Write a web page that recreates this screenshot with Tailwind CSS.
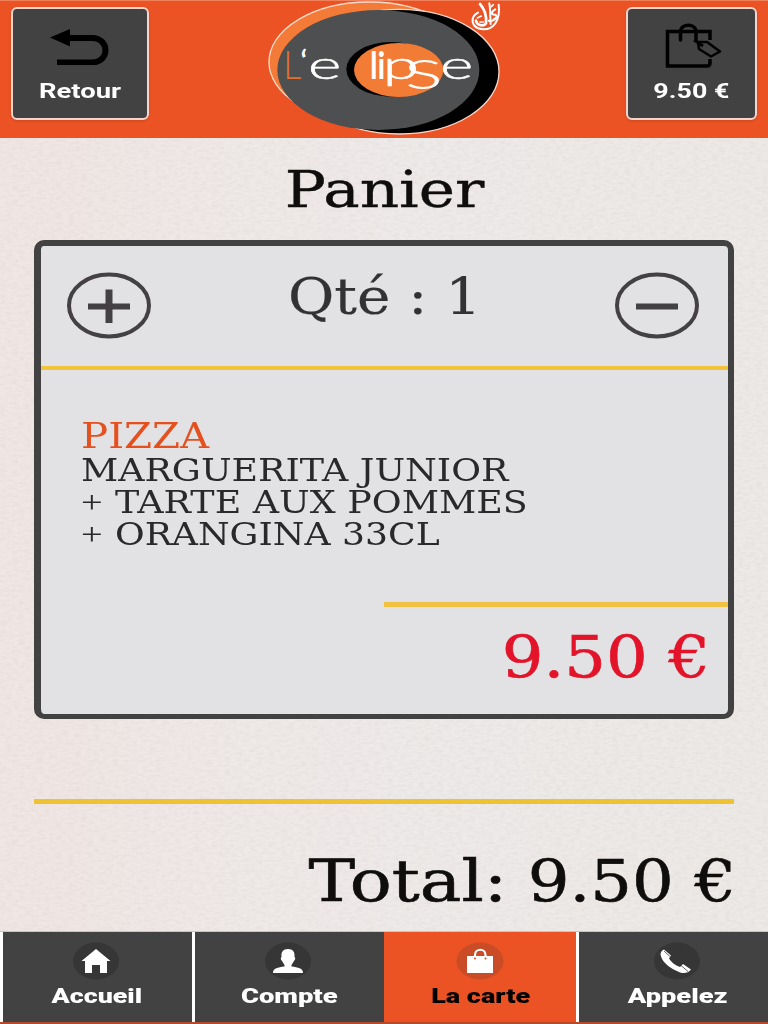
<!DOCTYPE html>
<html lang="fr">
<head>
  <meta charset="UTF-8" />
  <title>Panier</title>
  <script src="https://cdn.jsdelivr.net/npm/@tailwindcss/browser@4"></script>
</head>
<body class="w-[768px] h-[1024px] overflow-hidden">
  <div class="relative isolate w-[768px] h-[1024px] flex flex-col bg-[#ebe6e4] font-['DejaVu_Serif',serif]">

    <!-- Linen background -->
    <svg class="absolute inset-0 -z-10" width="768" height="1024">
      <defs>
        <filter id="linen" x="0" y="0" width="100%" height="100%">
          <feTurbulence type="fractalNoise" baseFrequency="0.16 0.4" numOctaves="3" seed="4" />
          <feColorMatrix values="0 0 0 0 0.5  0 0 0 0 0.45  0 0 0 0 0.42  0.3 0 0 0 -0.11" />
        </filter>
        <linearGradient id="tint">
          <stop offset="0" stop-color="#f0e6e3" />
          <stop offset="0.5" stop-color="#eeeae9" />
          <stop offset="1" stop-color="#ede9e6" />
        </linearGradient>
      </defs>
      <rect width="768" height="1024" fill="url(#tint)" />
      <rect width="768" height="1024" filter="url(#linen)" />
    </svg>

    <!-- Header -->
    <header class="h-[138px] shrink-0 flex justify-between items-start bg-[#eb5224] border-t border-[#f08059] px-[11px] font-[Roboto,sans-serif]">
      <button class="mt-[6px] w-[138px] h-[113px] rounded-md border-2 border-[#f3d5cb] bg-[#424243] shadow flex flex-col items-center">
        <svg class="mt-[18px] block" width="60" height="38" viewBox="0 0 60 38">
          <path d="M19 11H42C60 11 60 35.500 42 35.500H7" fill="none" stroke="#000" stroke-width="6" />
          <path d="M0 10.500L20 2V19.500Z" fill="#000" />
        </svg>
        <span class="mt-[14px] text-[20px] leading-[24px] font-bold text-white scale-x-[1.37]">Retour</span>
      </button>

      <svg class="-mt-px -ml-[7px] block" width="256" height="138" viewBox="0 0 768 414">
        <ellipse cx="340" cy="186" rx="301" ry="180" fill="#f47b37" stroke="#fbd9c8" stroke-width="4" />
        <ellipse cx="430" cy="215" rx="299" ry="187" fill="#000" stroke="#f7d6cb" stroke-width="4" />
        <ellipse cx="367" cy="210" rx="303" ry="180" fill="#4d4f50" />
        <ellipse cx="405" cy="208" rx="134" ry="82" fill="#000" />
        <ellipse cx="428" cy="210" rx="134" ry="81" fill="#f27b35" />
        <g font-family="Lato, sans-serif" font-weight="300" font-size="118" fill="#fff">
          <text x="82" y="238" fill="#e0702f" textLength="54" lengthAdjust="spacingAndGlyphs">L</text>
          <text x="134" y="212" font-size="84" font-weight="700">‘</text>
          <text x="156" y="238" stroke="#fff" stroke-width="1.500" textLength="100" lengthAdjust="spacingAndGlyphs">e</text>
          <text x="342" y="238" font-weight="700" font-size="116" textLength="46" lengthAdjust="spacingAndGlyphs">li</text>
          <text x="380" y="238" stroke="#fff" stroke-width="2" textLength="108" lengthAdjust="spacingAndGlyphs">p</text>
          <text x="444" y="268" font-size="172" textLength="118" lengthAdjust="spacingAndGlyphs">s</text>
          <text x="552" y="238" stroke="#fff" stroke-width="1.500" textLength="100" lengthAdjust="spacingAndGlyphs">e</text>
        </g>
        <!-- calligraphic emblem -->
        <g fill="none" stroke="#fff" stroke-linecap="round">
          <path d="M666 38C640 52 645 84 680 88C712 90 734 62 728 14" stroke-width="6" />
          <path d="M672 12C688 30 692 52 690 70C680 82 662 74 660 62" stroke-width="8" />
          <path d="M700 10C704 30 702 54 704 72M718 28C706 34 704 46 718 44C728 50 716 66 698 62" stroke-width="6" />
          <path d="M664 54L676 48M672 66H682M706 20L712 14M712 58L718 54" stroke-width="5" />
        </g>
      </svg>

      <button class="mt-[6px] w-[131px] h-[113px] rounded-md border-2 border-[#f3d5cb] bg-[#424243] shadow flex flex-col items-center">
        <svg class="mt-[14px] ml-[3px] block" width="57" height="46" viewBox="0 0 57 46" fill="none" stroke="#000">
          <path d="M45 17V8.500H2.500V43H42Q45 43 45 40V36" stroke-width="3.500" />
          <path d="M15.500 17V9C15.500 0 31 0 31 9V17" stroke-width="3.500" stroke-linecap="round" />
          <path d="M33 19L42 19L55 28.500L46 33.500L34 26Z" stroke-width="2.500" stroke-linejoin="round" />
          <path d="M29 17L38 23" stroke-width="3" />
        </svg>
        <span class="mt-[10px] text-[20px] leading-[24px] font-bold text-white whitespace-nowrap scale-x-[1.34]">9.50 €</span>
      </button>
    </header>

    <!-- Cart -->
    <main class="h-[793px] shrink-0 px-[34px] flex flex-col">
      <h1 class="mt-[22px] self-center text-[50px] leading-[60px] text-[#0f0e0d] scale-x-[1.225] [-webkit-text-stroke:0.4px]">Panier</h1>

      <section class="mt-[20px] h-[479px] shrink-0 flex flex-col rounded-[10px] border-l-[7px] border-r-[6px] border-t-[6px] border-b-[5px] border-[#434242] bg-[#e2e1e3]">
        <div class="h-[124px] shrink-0 flex justify-between border-b-4 border-[#f4c33c] pl-[25px] pr-[28px]">
          <svg class="mt-[26px] block" width="86" height="67" viewBox="0 0 86 67" fill="none" stroke="#434143">
            <ellipse cx="43" cy="33.500" rx="40" ry="31" stroke-width="4" />
            <path d="M22 34.500H64" stroke-width="6" />
            <path d="M43 17.500V51" stroke-width="7" />
          </svg>
          <h2 class="mt-[21px] ml-[4px] text-[50px] leading-[60px] text-[#323133] whitespace-nowrap scale-x-[1.13] [-webkit-text-stroke:0.2px]">Qté : 1</h2>
          <svg class="mt-[26px] block" width="86" height="67" viewBox="0 0 86 67" fill="none" stroke="#434143">
            <ellipse cx="43" cy="33.500" rx="40" ry="31" stroke-width="4" />
            <path d="M22 34.500H64" stroke-width="6" />
          </svg>
        </div>

        <div class="h-[232px] shrink-0 pt-[48px] pl-[40px] flex flex-col items-start text-[32px] leading-[32px] text-[#29282a] whitespace-nowrap">
          <p class="text-[36px] leading-[36px] text-[#e5501f] origin-left scale-x-[1.12]">PIZZA</p>
          <p class="origin-left scale-x-[1.136]">MARGUERITA JUNIOR</p>
          <p class="flex gap-[12px]"><span class="w-[22px] font-['Liberation_Serif',serif] origin-left scale-x-[1.2]">+</span><span class="origin-left scale-x-[1.138]">TARTE AUX POMMES</span></p>
          <p class="flex gap-[12px]"><span class="w-[22px] font-['Liberation_Serif',serif] origin-left scale-x-[1.2]">+</span><span class="origin-left scale-x-[1.13]">ORANGINA 33CL</span></p>
        </div>

        <div class="self-end w-[344px] h-[106px] pt-[20px] pr-[18px] border-t-[5px] border-[#f2c142] flex justify-end items-start">
          <p class="text-[57px] leading-[60px] text-[#e31329] whitespace-nowrap origin-right scale-x-[1.15] [-webkit-text-stroke:0.6px]">9.50 €</p>
        </div>
      </section>

      <div class="mt-[80px] -mr-[2px] pr-[2px] pt-[52px] relative flex justify-end gap-[47px] text-[57px] leading-[60px] text-[#0f0e0d] whitespace-nowrap [-webkit-text-stroke:0.6px]">
        <hr class="absolute left-0 top-0 w-[700px] border-t-[5px] border-[#efc233]" />
        <p class="origin-right scale-x-[1.225]">Total:</p>
        <p class="-mr-[2px] origin-right scale-x-[1.15]">9.50 €</p>
      </div>
    </main>

    <!-- Bottom nav -->
    <nav class="h-[93px] shrink-0 grid grid-cols-4 border-t border-[#c9c5c3] border-b-2 border-b-[#b5492c] bg-white font-[Roboto,sans-serif] font-black text-[20px] leading-[24px] text-white">
      <a class="ml-[3px] pr-[3px] bg-[#424243] flex flex-col items-center pt-[10px]">
        <svg class="block" width="48" height="38" viewBox="0 0 48 38">
          <ellipse cx="24" cy="19" rx="23" ry="18.500" fill="#363637" />
          <path d="M24 7L38.500 19H35V31H28V23H20V31H13V19H9.500Z" fill="#fff" />
        </svg>
        <span class="mt-[4px] ml-[2px] scale-x-[1.34]">Accueil</span>
      </a>
      <a class="ml-[3px] pr-[3px] bg-[#424243] flex flex-col items-center pt-[10px]">
        <svg class="block" width="48" height="38" viewBox="0 0 48 38">
          <ellipse cx="24" cy="19" rx="23" ry="18.500" fill="#363637" />
          <path d="M24 7C29 7 31 10 30.500 15C32 16 31 18 30 19L27.500 23V24.500C34 25.500 39 26 39 31H9C9 26 14 25.500 20.500 24.500V23L18 19C17 18 16 16 17.500 15C17 10 19 7 24 7Z" fill="#fff" />
        </svg>
        <span class="mt-[4px] ml-[2px] scale-x-[1.37]">Compte</span>
      </a>
      <a class="bg-[#eb5224] text-black flex flex-col items-center pt-[10px]">
        <svg class="block" width="48" height="38" viewBox="0 0 48 38">
          <ellipse cx="24" cy="19" rx="23.500" ry="18.500" fill="#c94c26" />
          <path d="M11 14H37V31H11Z" fill="#fff" />
          <path d="M19 16V13C19 6 29.500 6 29.500 13V16" fill="none" stroke="#fff" stroke-width="2.200" />
          <circle cx="19" cy="16.500" r="1" fill="#c94c26" />
          <circle cx="29.500" cy="16.500" r="1" fill="#c94c26" />
        </svg>
        <span class="mt-[4px] ml-[2px] scale-x-[1.35]">La carte</span>
      </a>
      <a class="ml-[3px] pl-[6px] bg-[#424243] flex flex-col items-center pt-[10px]">
        <svg class="block" width="48" height="38" viewBox="0 0 48 38">
          <ellipse cx="24" cy="19" rx="23" ry="18.500" fill="#363637" />
          <path d="M11 7.500L18 13.500L16 16.500C18 20 22 23.500 27 25L30 22L38 27.500C35 31.500 30 32 25 29.500C16 26 8 19 7.500 12Q8 8.500 11 7.500Z" fill="#fff" />
          <path d="M11 9L17.500 15M28 23.500L35 29.500" stroke="#424243" stroke-width="0.800" />
        </svg>
        <span class="mt-[4px] ml-[2px] scale-x-[1.36]">Appelez</span>
      </a>
    </nav>
  </div>
</body>
</html>
